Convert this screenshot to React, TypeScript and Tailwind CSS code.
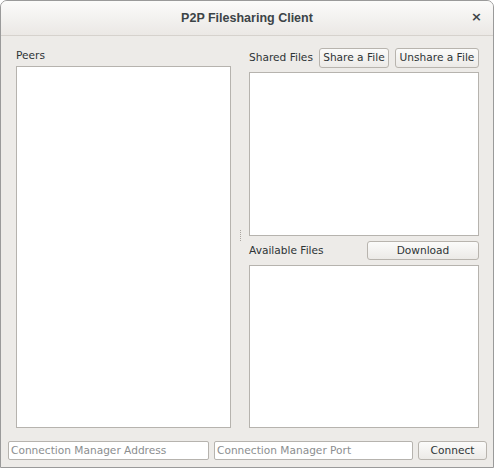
import React from "react";

const font = { fontFamily: '"DejaVu Sans", "Liberation Sans", sans-serif' };

export default function App() {
  const btn =
    "shrink-0 whitespace-nowrap text-[10.6px] bg-gradient-to-b from-[#fbfbfa] to-[#eceae7] border border-[#b8b4ae] rounded-[3px] text-[#2e3436]";
  return (
    <div
      className="w-[494px] h-[468px] flex flex-col border border-[#9a9a9a] rounded-t-[7px] overflow-hidden bg-[#edebe8] text-[#2e3436]"
      style={font}
    >
      <div className="h-[35px] shrink-0 relative flex items-center justify-center bg-gradient-to-b from-[#fbfbfa] to-[#ebe8e5] border-b border-[#d6d2cd]">
        <span
          className="text-[12.5px] font-bold text-[#3c4447]"
          style={{ fontFamily: '"Liberation Sans", "DejaVu Sans", sans-serif' }}
        >
          P2P Filesharing Client
        </span>
        <span className="absolute right-[11px] top-[9px] text-[13px] font-bold text-[#3c4447] leading-none">×</span>
      </div>
      <div className="flex-1 flex flex-col">
        <div className="flex pl-[15px] pt-[10px] h-[392px]">
          <div className="w-[215px] flex flex-col">
            <div className="h-[20px] pt-[2px] text-[10.6px] leading-[14px] whitespace-nowrap">Peers</div>
            <div className="flex-1 bg-white border border-[#b6b3ae]" />
          </div>
          <div className="w-[18px] flex items-center justify-center">
            <div className="flex flex-col gap-[1px] mt-[-4px]">
              {[0, 1, 2, 3, 4, 5].map((i) => (
                <div key={i} className="w-[1px] h-[1px] bg-[#a9a5a0]" />
              ))}
            </div>
          </div>
          <div className="w-[230px] flex flex-col">
            <div className="h-[20px] mt-[2px] flex items-center">
              <span className="text-[10.6px] whitespace-nowrap">Shared Files</span>
              <button className={btn + " ml-[6px] h-[20px] w-[70px]"}>Share a File</button>
              <button className={btn + " ml-[6px] h-[20px] flex-1"}>Unshare a File</button>
            </div>
            <div className="h-[164px] mt-[4px] bg-white border border-[#b6b3ae]" />
            <div className="h-[19px] mt-[5px] flex items-center justify-between">
              <span className="text-[10.6px] whitespace-nowrap">Available Files</span>
              <button className={btn + " w-[112px] h-[19px]"}>Download</button>
            </div>
            <div className="flex-1 mt-[5px] bg-white border border-[#b6b3ae]" />
          </div>
        </div>
        <div className="flex pl-[7px] mt-[13px] gap-[5px] h-[19px]">
          <div className="w-[201px] h-[19px] bg-white border border-[#b6b3ae] rounded-[2px] text-[10.6px] text-[#8b8e8f] px-[2px] leading-[17px] whitespace-nowrap">
            Connection Manager Address
          </div>
          <div className="w-[199px] h-[19px] bg-white border border-[#b6b3ae] rounded-[2px] text-[10.6px] text-[#8b8e8f] px-[2px] leading-[17px] whitespace-nowrap">
            Connection Manager Port
          </div>
          <button className={btn + " w-[69px] h-[19px]"}>Connect</button>
        </div>
      </div>
    </div>
  );
}
